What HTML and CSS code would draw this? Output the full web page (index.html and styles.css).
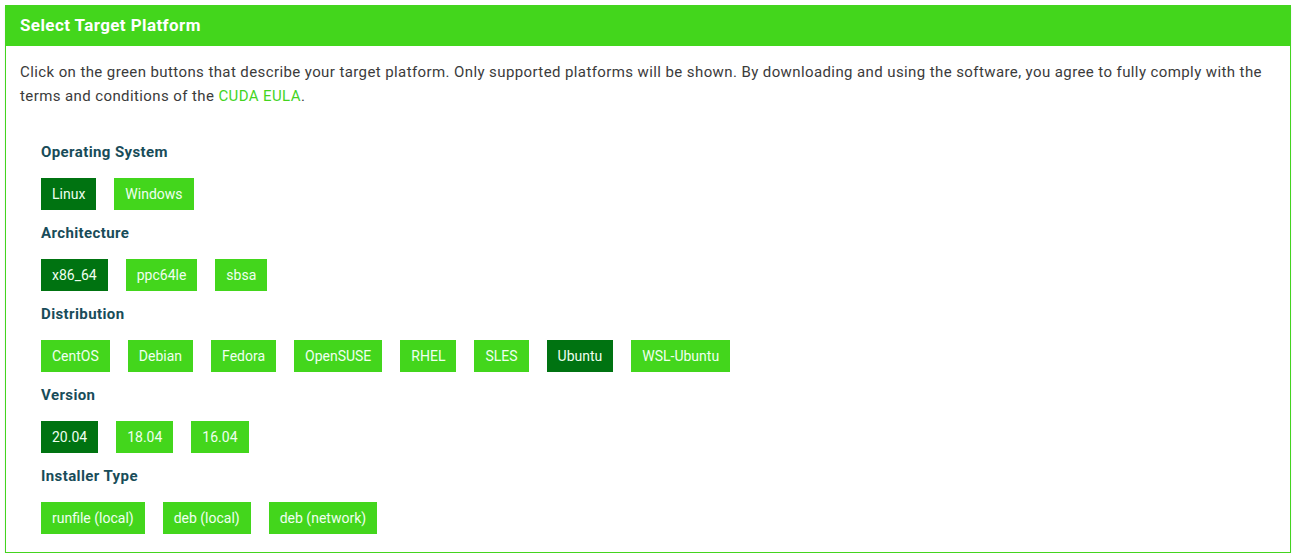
FILE: index.html
```html
<!DOCTYPE html>
<html lang="en">
  <head>
    <meta charset="UTF-8" />
    <meta name="viewport" content="width=device-width, initial-scale=1.0" />
    <title>Select Target Platform</title>
    <link rel="stylesheet" href="styles.css">
  </head>
  <body>
    <div class="panel">
      <div class="panel-heading">Select Target Platform</div>
      <div class="panel-body">
        <p class="intro">
          Click on the green buttons that describe your target platform. Only supported platforms will be shown. By downloading and using the software, you agree to fully comply with the terms and conditions of the <a href="#">CUDA EULA</a>.
        </p>
        <div class="selector">
          <div class="row">
            <div class="row-label">Operating System</div>
            <div class="btns">
              <button class="opt active">Linux</button>
              <button class="opt">Windows</button>
            </div>
          </div>
          <div class="row">
            <div class="row-label">Architecture</div>
            <div class="btns">
              <button class="opt active">x86_64</button>
              <button class="opt">ppc64le</button>
              <button class="opt">sbsa</button>
            </div>
          </div>
          <div class="row">
            <div class="row-label">Distribution</div>
            <div class="btns">
              <button class="opt">CentOS</button>
              <button class="opt">Debian</button>
              <button class="opt">Fedora</button>
              <button class="opt">OpenSUSE</button>
              <button class="opt">RHEL</button>
              <button class="opt">SLES</button>
              <button class="opt active">Ubuntu</button>
              <button class="opt">WSL-Ubuntu</button>
            </div>
          </div>
          <div class="row">
            <div class="row-label">Version</div>
            <div class="btns">
              <button class="opt active">20.04</button>
              <button class="opt">18.04</button>
              <button class="opt">16.04</button>
            </div>
          </div>
          <div class="row">
            <div class="row-label">Installer Type</div>
            <div class="btns">
              <button class="opt">runfile (local)</button>
              <button class="opt">deb (local)</button>
              <button class="opt">deb (network)</button>
            </div>
          </div>
        </div>
      </div>
    </div>
  </body>
</html>
```

FILE: styles.css
```css
* {
  margin: 0;
  padding: 0;
  box-sizing: border-box;
}

body {
  font-family: Roboto, "Liberation Sans", sans-serif;
  background-color: #ffffff;
  padding: 5px 3px 0 5px;
}

.panel {
  border: 1px solid #44d41f;
  box-shadow: 0 2px 2px rgba(0, 0, 0, 0.08);
}

.panel-heading {
  background-color: #43d61c;
  color: #ffffff;
  font-size: 17px;
  font-weight: bold;
  letter-spacing: 0.4px;
  height: 40px;
  line-height: 38px;
  padding: 0 14px;
}

.panel-body {
  padding: 14px 14px 18px 14px;
}

.intro {
  color: #3b3b3b;
  font-size: 15px;
  letter-spacing: 0.4px;
  line-height: 24px;
}

.intro a {
  color: #44d41f;
  text-decoration: none;
}

/* rijen met knoppen */
.selector {
  padding: 34px 0 0 21px;
}

.row {
  margin-bottom: 13px;
}

.row:last-child {
  margin-bottom: 0;
}

.row-label {
  color: #184c59;
  font-size: 15px;
  font-weight: bold;
  letter-spacing: 0.4px;
  line-height: 20px;
  margin-bottom: 16px;
}

.btns {
  display: flex;
  gap: 18px;
}

.opt {
  font-family: inherit;
  font-size: 14px;
  height: 32px;
  padding: 0 11px;
  border: none;
  background-color: #43d61c;
  color: #effff0;
  cursor: pointer;
}

.opt.active {
  background-color: #007311;
}
```
